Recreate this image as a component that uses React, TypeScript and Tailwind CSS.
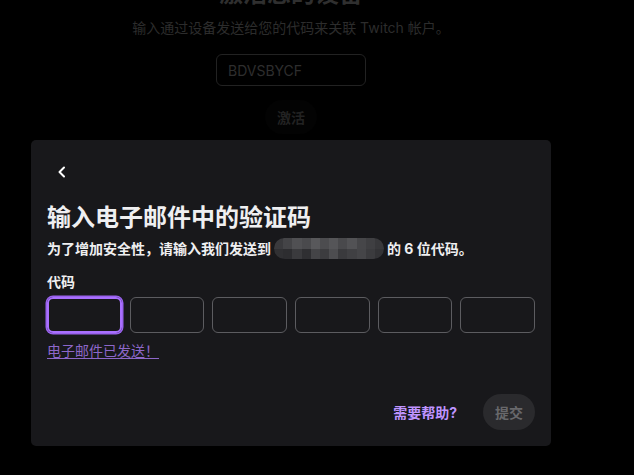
import React from "react";

const blocks = [
  ["#3a3a3d", "#444447", "#505053", "#4a4a4d", "#58585b", "#4c4c4f", "#555558", "#49494c", "#525255", "#464649", "#3f3f42", "#38383b"],
  ["#303033", "#2d2d30", "#3a3a3d", "#2f2f32", "#444447", "#3c3c3f", "#4d4d50", "#3a3a3d", "#404043", "#454548", "#3b3b3e", "#333336"],
];

export default function App() {
  return (
    <div
      className="relative w-[634px] h-[475px] overflow-hidden bg-black"
      style={{ fontFamily: 'Inter, "Noto Sans CJK SC", sans-serif' }}
    >
      {/* background page (dimmed) */}
      <div className="w-[582px] flex flex-col items-center mt-[-21px]">
        <div className="text-[24px] leading-[30px] font-bold text-[#2f2f2f]">激活您的设备</div>
        <div className="mt-[9px] text-[14px] leading-[20px] text-[#2c2c2c]">
          输入通过设备发送给您的代码来关联 Twitch 帐户。
        </div>
        <div className="mt-[16px] w-[150px] h-[32px] rounded-[6px] border border-[#222222] flex items-center px-[11px] text-[14px] text-[#2e2e2e]">
          BDVSBYCF
        </div>
        <div className="mt-[14px] h-[34px] px-[12px] rounded-full bg-[#030303] flex items-center text-[14px] font-bold text-[#222222]">
          激活
        </div>
      </div>

      {/* modal */}
      <div className="absolute left-[31px] top-[140px] w-[520px] rounded-[5px] bg-[#18181b] px-4 pt-[17px] pb-4 flex flex-col">
        <button className="w-[30px] h-[30px] flex items-center justify-center text-white">
          <svg width="20" height="20" viewBox="0 0 20 20" fill="none">
            <path d="M12 5.5L7.5 10L12 14.5" stroke="white" strokeWidth="2" strokeLinecap="round" strokeLinejoin="round" />
          </svg>
        </button>
        <h1 className="mt-[16px] text-[24px] leading-[30px] font-bold text-[#efeff1]">输入电子邮件中的验证码</h1>
        <div className="mt-[5px] text-[14px] leading-[20px] font-bold text-[#efeff1] flex items-center">
          <span>为了增加安全性，请输入我们发送到</span>
          <span className="mx-[3px] w-[110px] h-[21px] rounded-full overflow-hidden flex flex-col blur-[0.6px]">
            {blocks.map((row, i) => (
              <span key={i} className="flex flex-1">
                {row.map((c, j) => (
                  <span key={j} className="flex-1" style={{ background: c }} />
                ))}
              </span>
            ))}
          </span>
          <span>的 6 位代码。</span>
        </div>
        <div className="mt-[13px] text-[14px] leading-[20px] font-bold text-[#efeff1]">代码</div>
        <div className="mt-[5px] grid grid-cols-6 gap-2">
          {[0, 1, 2, 3, 4, 5].map((i) => (
            <div
              key={i}
              className={
                i === 0
                  ? "h-[36px] rounded-[6px] border-2 border-[#a970ff] shadow-[0_0_0_1.5px_#9a62f0]"
                  : "h-[36px] rounded-[6px] border border-[#5c5c60]"
              }
            />
          ))}
        </div>
        <div className="mt-[8px] text-[14px] leading-[20px]">
          <span className="text-[#8d67c9] underline underline-offset-2">电子邮件已发送！</span>
        </div>
        <div className="mt-[33px] flex items-center justify-end">
          <span className="text-[14px] font-bold text-[#bf94ff]">需要帮助?</span>
          <button className="ml-[26px] h-[36px] px-[12px] rounded-full bg-[#2a2a2d] text-[14px] font-bold text-[#68686b]">
            提交
          </button>
        </div>
      </div>
    </div>
  );
}
